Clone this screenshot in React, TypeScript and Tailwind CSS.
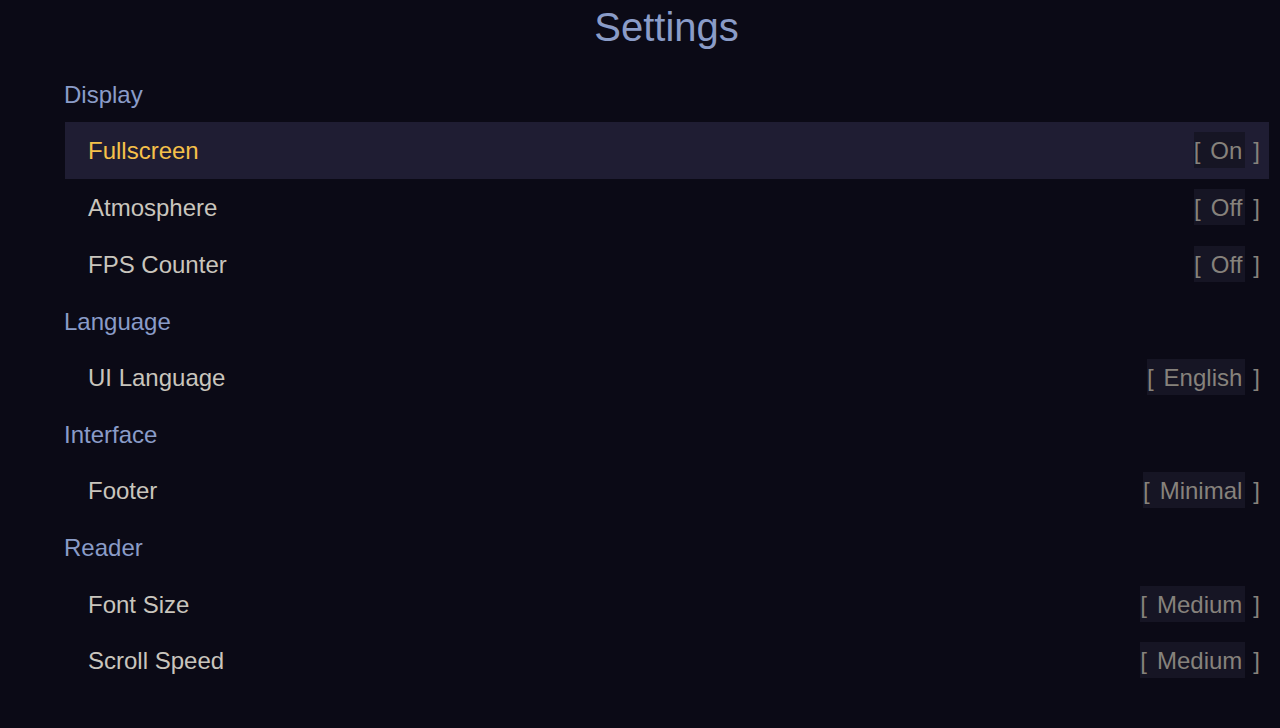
import React from "react";

type Item =
  | { kind: "header"; label: string }
  | { kind: "row"; label: string; value: string; active?: boolean };

const items: Item[] = [
  { kind: "header", label: "Display" },
  { kind: "row", label: "Fullscreen", value: "On", active: true },
  { kind: "row", label: "Atmosphere", value: "Off" },
  { kind: "row", label: "FPS Counter", value: "Off" },
  { kind: "header", label: "Language" },
  { kind: "row", label: "UI Language", value: "English" },
  { kind: "header", label: "Interface" },
  { kind: "row", label: "Footer", value: "Minimal" },
  { kind: "header", label: "Reader" },
  { kind: "row", label: "Font Size", value: "Medium" },
  { kind: "row", label: "Scroll Speed", value: "Medium" },
];

export default function App() {
  return (
    <div
      className="w-[1280px] h-[728px] bg-[#0b0a16] overflow-hidden pl-[64px] pr-[11px]"
      style={{ fontFamily: '"Liberation Sans", Arial, sans-serif' }}
    >
      <div className="h-[65.33px] pt-[7px] flex justify-center">
        <h1 className="text-[40px] leading-none text-[#8a9cc8] font-normal">Settings</h1>
      </div>
      <div className="flex flex-col">
        {items.map((it, i) =>
          it.kind === "header" ? (
            <div
              key={i}
              className="h-[56.67px] pt-[3px] flex items-center text-[24px] leading-none text-[#8a9cc8]"
            >
              {it.label}
            </div>
          ) : (
            <div
              key={i}
              className={
                it.active
                  ? "h-[56.67px] ml-px flex items-center justify-between pl-[23px] pr-[9px] bg-[#1f1d33]"
                  : "h-[56.67px] ml-px flex items-center justify-between pl-[23px] pr-[9px]"
              }
            >
              <span
                className={
                  it.active
                    ? "pt-[2px] text-[24px] leading-none text-[#f5c14a]"
                    : "pt-[2px] text-[24px] leading-none text-[#c9c5bd]"
                }
              >
                {it.label}
              </span>
              <div className="flex items-center text-[24px] leading-none text-[#86827c]">
                <div className="h-9 pt-[2px] flex items-center bg-[#161524] pr-[3px]">
                  <span>[</span>
                  <span className="ml-[10px]">{it.value}</span>
                </div>
                <span className="ml-[8px] pt-[2px]">]</span>
              </div>
            </div>
          )
        )}
      </div>
    </div>
  );
}
